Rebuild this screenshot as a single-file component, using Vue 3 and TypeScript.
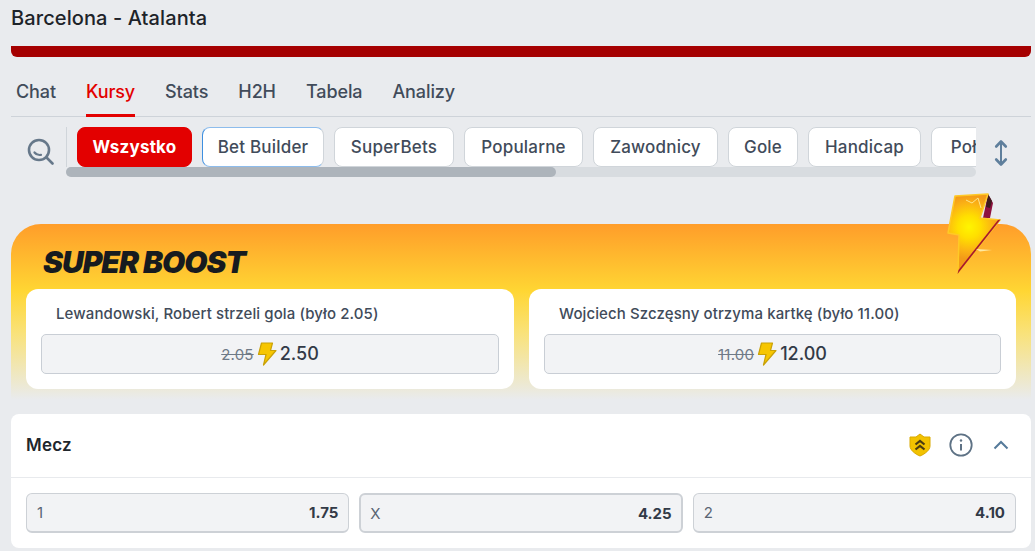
<script setup lang="ts">
import { ref } from 'vue';

// Dane widoku meczu
const tabs = ['Chat', 'Kursy', 'Stats', 'H2H', 'Tabela', 'Analizy'];
const activeTab = ref('Kursy');
const chips = [
  { label: 'Wszystko', width: 115 },
  { label: 'Bet Builder', width: 122 },
  { label: 'SuperBets', width: 120 },
  { label: 'Popularne', width: 119 },
  { label: 'Zawodnicy', width: 125 },
  { label: 'Gole', width: 70 },
  { label: 'Handicap', width: 113 },
  { label: 'Połowy', width: 100 },
];
const boosts = [
  { label: 'Lewandowski, Robert strzeli gola (było 2.05)', oldOdd: '2.05', odd: '2.50' },
  { label: 'Wojciech Szczęsny otrzyma kartkę (było 11.00)', oldOdd: '11.00', odd: '12.00' },
];
const odds = [
  { name: '1', value: '1.75' },
  { name: 'X', value: '4.25' },
  { name: '2', value: '4.10' },
];
</script>

<template>
  <div class="page">
    <h1 class="title">Barcelona - Atalanta</h1>
    <div class="red-bar"></div>

    <nav class="tabs">
      <span v-for="tab in tabs" :key="tab" class="tab" :class="{ active: tab === activeTab }">{{ tab }}</span>
    </nav>

    <div class="filters">
      <div class="search">
        <svg width="27" height="27" viewBox="0 0 27 27" fill="none">
          <circle cx="12" cy="12" r="10" stroke="#66788a" stroke-width="2.600" />
          <path d="M7.500 14.500c1.500 2 4 2.800 6.500 2.400" stroke="#66788a" stroke-width="2.200" stroke-linecap="round" />
          <path d="M19.500 19.500l6 6" stroke="#66788a" stroke-width="2.600" stroke-linecap="round" />
        </svg>
      </div>
      <div class="chips-wrap">
        <div class="chips">
          <span
            v-for="(chip, i) in chips"
            :key="chip.label"
            class="chip"
            :class="{ selected: i === 0, focused: i === 1 }"
            :style="{ width: chip.width + 'px' }"
          >{{ chip.label }}</span>
        </div>
        <div class="track"><div class="thumb"></div></div>
      </div>
      <div class="sort">
        <svg width="16" height="28" viewBox="0 0 16 28" fill="none" stroke="#5f7f9c" stroke-linecap="round" stroke-linejoin="round">
          <path d="M8 3v22" stroke-width="2" />
          <path d="M3.200 7.500L8 2.500l4.800 5" stroke-width="2.600" />
          <path d="M3.200 20.500L8 25.500l4.800-5" stroke-width="2.600" />
        </svg>
      </div>
    </div>

    <section class="boost">
      <svg class="boost-bolt" width="58" height="86" viewBox="0 0 58 86">
        <defs>
          <radialGradient id="boltFill" gradientUnits="userSpaceOnUse" cx="23" cy="36" r="32">
            <stop offset="0" stop-color="#fff500" />
            <stop offset="0.35" stop-color="#ffdf00" />
            <stop offset="0.75" stop-color="#fbb214" />
            <stop offset="1" stop-color="#f39a18" />
          </radialGradient>
        </defs>
        <path d="M42 3l5 9-3 15-7 0z" fill="#8e1240" />
        <path d="M42 3l4 7-2 7-4-1z" fill="#3f1a1e" />
        <path d="M9 5L42 3 34 27l20 2L12 82l1-38-11-2z" fill="url(#boltFill)" stroke="#ffc926" stroke-width="1.500" stroke-linejoin="round" />
        <path d="M54.500 28.500L11.500 83l1-4L52 29z" fill="#a8182e" />
        <path d="M30 58l16 1-12 1.500z" fill="#ffe9a0" />
        <path d="M20 9l6 3 6-5 3 10" fill="none" stroke="#ffe68a" stroke-width="1" />
      </svg>
      <h2 class="boost-title">SUPER BOOST</h2>
      <div class="boost-grid">
        <div v-for="boost in boosts" :key="boost.label" class="boost-card">
          <div class="boost-label">{{ boost.label }}</div>
          <div class="boost-odd">
            <span class="old-odd">{{ boost.oldOdd }}</span>
            <svg width="20" height="24" viewBox="0 0 20 24">
              <path d="M4.500 1h11l-2 7.500H19L6.500 23l2.500-10.500H1.500z" fill="#f7c600" stroke="#c9a106" stroke-width="1.200" stroke-linejoin="round" />
            </svg>
            <span class="new-odd">{{ boost.odd }}</span>
          </div>
        </div>
      </div>
    </section>

    <section class="market">
      <header class="market-head">
        <span class="market-name">Mecz</span>
        <div class="market-icons">
          <svg width="22" height="24" viewBox="0 0 22 24">
            <path d="M11 1l4 3h6v9c0 4-5 8-10 10C6 21 1 17 1 13V4h6z" fill="#f2c200" stroke="#d9a900" stroke-width="1" />
            <path d="M6.500 11.500L11 8l4.500 3.500M6.500 16.500L11 13l4.500 3.500" fill="none" stroke="#4a3c12" stroke-width="2.200" />
          </svg>
          <svg width="24" height="24" viewBox="0 0 24 24" fill="none">
            <circle cx="12" cy="12" r="10.700" stroke="#5e7285" stroke-width="1.800" />
            <circle cx="12" cy="7.500" r="1.200" fill="#5e7285" />
            <path d="M12 11v6.500" stroke="#5e7285" stroke-width="2" />
          </svg>
          <svg class="chevron" width="16" height="10" viewBox="0 0 16 10" fill="none">
            <path d="M1.500 8.500L8 2l6.500 6.500" stroke="#557a9a" stroke-width="2" />
          </svg>
        </div>
      </header>
      <div class="odds">
        <div v-for="odd in odds" :key="odd.name" class="odd" :class="{ pressed: odd.name === 'X' }">
          <span class="odd-name">{{ odd.name }}</span>
          <span class="odd-value">{{ odd.value }}</span>
        </div>
      </div>
    </section>
  </div>
</template>

<style>
html,
body {
  margin: 0;
  height: 551px;
  overflow: hidden;
  background: #e9ebee;
}
</style>

<style scoped>
.page {
  box-sizing: border-box;
  width: 1035px;
  height: 551px;
  overflow: hidden;
  padding: 0 4px 0 11px;
  background: #e9ebee;
  font-family: Inter, "Noto Sans", sans-serif;
  color: #414b5a;
}

.title {
  margin: 0;
  height: 46px;
  padding-top: 6px;
  box-sizing: border-box;
  font-size: 20px;
  line-height: 24px;
  font-weight: 500;
  letter-spacing: 0.1px;
  color: #1d2329;
}

.red-bar {
  height: 11px;
  background: #a50000;
  border-radius: 0 0 6px 6px;
}

/* Zakładki */
.tabs {
  display: flex;
  gap: 30px;
  height: 60px;
  padding: 0 0 0 5px;
  box-sizing: border-box;
  border-bottom: 1px solid #ced3d9;
}

.tab {
  height: 60px;
  box-sizing: border-box;
  padding-top: 24px;
  font-size: 18px;
  line-height: 22px;
  letter-spacing: -0.1px;
  font-weight: 500;
}

.tab.active {
  color: #e30000;
  border-bottom: 3px solid #e30000;
}

/* Filtry */
.filters {
  display: flex;
  height: 60px;
  padding-top: 10px;
  box-sizing: border-box;
}

.search {
  width: 55px;
  flex: none;
  height: 40px;
  padding: 11px 0 0 16px;
  box-sizing: border-box;
}

.chips-wrap {
  width: 910px;
  flex: none;
  overflow: hidden;
}

.chips {
  display: flex;
  gap: 10px;
  height: 40px;
  padding-left: 10px;
  overflow: hidden;
  border-left: 1px solid #d0d5da;
}

.chip {
  flex: none;
  height: 40px;
  box-sizing: border-box;
  display: flex;
  align-items: center;
  justify-content: center;
  background: #fff;
  border: 1px solid #d0d5da;
  border-radius: 8px;
  font-size: 17px;
  letter-spacing: 0.2px;
  font-weight: 500;
}

.chip.selected {
  background: #e30000;
  border-color: #e30000;
  color: #fff;
  font-weight: 700;
}

.chip.focused {
  border-left-color: #3d8fe0;
  border-top-color: #8dbcec;
  border-bottom-color: #8dbcec;
}

.track {
  height: 10px;
  background: #d8dce0;
  border-radius: 5px;
}

.thumb {
  width: 490px;
  height: 10px;
  background: #adb4bb;
  border-radius: 5px;
}

.sort {
  flex: none;
  padding: 12px 0 0 17px;
}

/* Super boost */
.boost {
  position: relative;
  margin-top: 47px;
  width: 1020px;
  height: 176px;
  box-sizing: border-box;
  padding: 0 15px;
  border-radius: 30px 30px 0 0;
  background: linear-gradient(180deg, #ff9d2a 0%, #ffd633 38%, #f9e27a 62%, #e9ebee 100%);
}

.boost-bolt {
  position: absolute;
  top: -33px;
  left: 935px;
}

.boost-title {
  margin: 0;
  height: 65px;
  padding: 20px 0 0 17px;
  box-sizing: border-box;
  font-size: 30px;
  line-height: 36px;
  font-weight: 900;
  font-style: italic;
  letter-spacing: -1px;
  color: #171b1f;
}

.boost-grid {
  display: grid;
  grid-template-columns: 488px 487px;
  gap: 15px;
}

.boost-card {
  height: 100px;
  padding: 0 15px;
  box-sizing: border-box;
  background: #fff;
  border-radius: 12px;
}

.boost-label {
  height: 45px;
  padding: 15px 0 0 15px;
  box-sizing: border-box;
  font-size: 15px;
  line-height: 20px;
  letter-spacing: 0.1px;
  font-weight: 500;
}

.boost-odd {
  height: 40px;
  display: flex;
  align-items: center;
  justify-content: center;
  gap: 3px;
  box-sizing: border-box;
  background: #f2f3f5;
  border: 1px solid #c9ced5;
  border-radius: 5px;
}

.old-odd {
  font-size: 15px;
  letter-spacing: 0.2px;
  color: #6f7a87;
  text-decoration: line-through;
}

.new-odd {
  font-size: 18px;
  line-height: 20px;
  font-weight: 500;
  color: #323a47;
}

/* Rynek */
.market {
  margin-top: 14px;
  width: 1020px;
  height: 134px;
  background: #fff;
  border-radius: 8px;
}

.market-head {
  height: 64px;
  padding: 0 22px 2px 15px;
  box-sizing: border-box;
  display: flex;
  align-items: center;
  justify-content: space-between;
  border-bottom: 1px solid #e8eaed;
}

.market-name {
  font-size: 17px;
  letter-spacing: 0.2px;
  font-weight: 600;
  color: #20262c;
}

.market-icons {
  display: flex;
  align-items: center;
  gap: 18px;
}

.chevron {
  margin-left: 2px;
}

.odds {
  display: grid;
  grid-template-columns: repeat(3, 1fr);
  gap: 10px;
  padding: 15px 15px 0;
}

.odd {
  height: 40px;
  padding: 0 10px;
  box-sizing: border-box;
  display: flex;
  align-items: center;
  justify-content: space-between;
  background: #f2f3f5;
  border: 1px solid #cdd1d6;
  border-bottom-width: 2px;
  border-radius: 6px;
  font-size: 15px;
}

.odd.pressed {
  border-width: 2px;
  padding: 0 9px;
}

.odd-name {
  color: #5a6573;
}

.odd-value {
  font-weight: 700;
  font-size: 15px;
  color: #323a47;
}
</style>
